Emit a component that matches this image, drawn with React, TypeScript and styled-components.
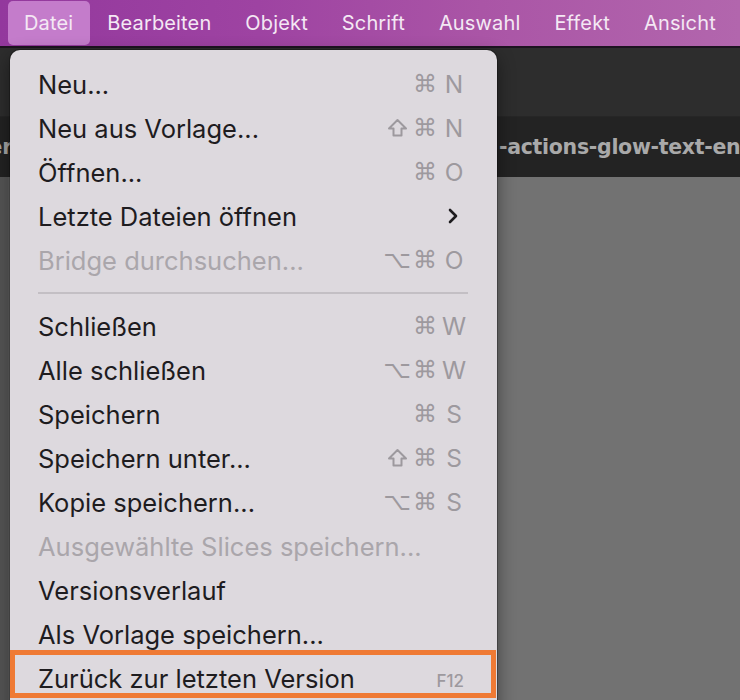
import React from 'react'
import styled, { createGlobalStyle } from 'styled-components'

const GlobalStyle = createGlobalStyle`
  html, body {
    margin: 0;
    padding: 0;
    background: #2d2d2d;
  }
  #root {
    width: 740px;
    height: 700px;
    overflow: hidden;
  }
`

type Shortcut = {
	mods: string[]
	key: string
}

type MenuEntry =
	| { kind: 'item'; label: string; shortcut?: Shortcut; fkey?: string; disabled?: boolean; submenu?: boolean; marked?: boolean }
	| { kind: 'separator' }

const topMenus = ['Datei', 'Bearbeiten', 'Objekt', 'Schrift', 'Auswahl', 'Effekt', 'Ansicht']

const entries: MenuEntry[] = [
	{ kind: 'item', label: 'Neu...', shortcut: { mods: ['cmd'], key: 'N' } },
	{ kind: 'item', label: 'Neu aus Vorlage...', shortcut: { mods: ['shift', 'cmd'], key: 'N' } },
	{ kind: 'item', label: 'Öffnen...', shortcut: { mods: ['cmd'], key: 'O' } },
	{ kind: 'item', label: 'Letzte Dateien öffnen', submenu: true },
	{ kind: 'item', label: 'Bridge durchsuchen...', shortcut: { mods: ['alt', 'cmd'], key: 'O' }, disabled: true },
	{ kind: 'separator' },
	{ kind: 'item', label: 'Schließen', shortcut: { mods: ['cmd'], key: 'W' } },
	{ kind: 'item', label: 'Alle schließen', shortcut: { mods: ['alt', 'cmd'], key: 'W' } },
	{ kind: 'item', label: 'Speichern', shortcut: { mods: ['cmd'], key: 'S' } },
	{ kind: 'item', label: 'Speichern unter...', shortcut: { mods: ['shift', 'cmd'], key: 'S' } },
	{ kind: 'item', label: 'Kopie speichern...', shortcut: { mods: ['alt', 'cmd'], key: 'S' } },
	{ kind: 'item', label: 'Ausgewählte Slices speichern...', disabled: true },
	{ kind: 'item', label: 'Versionsverlauf' },
	{ kind: 'item', label: 'Als Vorlage speichern...' },
	{ kind: 'item', label: 'Zurück zur letzten Version', fkey: 'F12', marked: true },
]

// shift is drawn, the other two modifiers are plain glyphs
const ShiftIcon = () => (
	<svg width="21" height="20" viewBox="0 0 21 20">
		<path d="M10.5 2 L19 10.5 L14.5 10.5 L14.5 17.5 L6.5 17.5 L6.5 10.5 L2 10.5 Z" fill="none" stroke="currentColor" strokeWidth="2" strokeLinejoin="round" />
	</svg>
)

const Modifier = ({ name }: { name: string }) => {
	if (name === 'shift') return <Mod><ShiftIcon /></Mod>
	return <Mod>{name === 'cmd' ? '⌘' : '⌥'}</Mod>
}

const Chevron = () => (
	<svg width="12" height="18" viewBox="0 0 12 18">
		<polyline points="3,3 9,9 3,15" fill="none" stroke="#1e1c1f" strokeWidth="2.6" strokeLinecap="round" strokeLinejoin="round" />
	</svg>
)

export default function App() {
	return (
		<>
			<GlobalStyle />
			<Screen>
				<MenuBar>
					{topMenus.map((m, i) => (
						<BarItem key={m} active={i === 0}>{m}</BarItem>
					))}
				</MenuBar>
				<Workspace>
					<Toolbar />
					<TabStrip>
						<TabClip><TabLabel>er</TabLabel></TabClip>
						<TabLabel>-actions-glow-text-en</TabLabel>
					</TabStrip>
					<Canvas />
				</Workspace>
				<Dropdown>
					{entries.map((e, i) =>
						e.kind === 'separator' ? (
							<Separator key={i} />
						) : (
							<Row key={i} disabled={e.disabled} marked={e.marked}>
								<Label>{e.label}</Label>
								{e.shortcut && (
									<Keys>
										<Mods>
											{e.shortcut.mods.map(m => (
												<Modifier key={m} name={m} />
											))}
										</Mods>
										<Key>{e.shortcut.key}</Key>
									</Keys>
								)}
								{e.fkey && <FKey>{e.fkey}</FKey>}
								{e.submenu && <Chevron />}
							</Row>
						)
					)}
				</Dropdown>
			</Screen>
		</>
	)
}

const Screen = styled.div`
  position: relative;
  width: 740px;
  height: 700px;
  display: flex;
  flex-direction: column;
  overflow: hidden;
  font-family: Inter, "Liberation Sans", sans-serif;
`

const MenuBar = styled.div`
  height: 48px;
  display: flex;
  align-items: stretch;
  padding: 1px 0 1px 8px;
  box-sizing: border-box;
  background: linear-gradient(90deg, #93389d 0%, #9e43a2 35%, #aa55a6 65%, #b266ad 100%);
  border-bottom: 2px solid #1d1320;
  flex-shrink: 0;
`

const BarItem = styled.div<{ active?: boolean }>`
  display: flex;
  align-items: center;
  padding: 0 17px 0 16px;
  margin-right: 1px;
  border-radius: 5px;
  font-size: 20px;
  color: #f4e8f4;
  letter-spacing: 0.15px;
  background: ${p => (p.active ? '#c47ccb' : 'transparent')};
`

const Workspace = styled.div`
  flex: 1;
  display: flex;
  flex-direction: column;
`

const Toolbar = styled.div`
  height: 68px;
  flex-shrink: 0;
  background: #2d2d2d;
  border-bottom: 1px solid #262626;
`

const TabStrip = styled.div`
  height: 60px;
  flex-shrink: 0;
  background: #232323;
  display: flex;
  align-items: center;
  overflow: hidden;
`

const TabClip = styled.div`
  width: 12px;
  flex-shrink: 0;
  overflow: hidden;
  display: flex;
  justify-content: flex-end;
  margin-right: 487px;
`

const TabLabel = styled.span`
  flex-shrink: 0;
  font-family: "DejaVu Sans", sans-serif;
  font-weight: bold;
  font-size: 20.5px;
  letter-spacing: -0.3px;
  color: #a9a9a9;
  white-space: nowrap;
`

const Canvas = styled.div`
  flex: 1;
  background: linear-gradient(90deg, #555 0px, #595959 8px, #727272 10px, #727272 100%);
`

const Dropdown = styled.div`
  position: absolute;
  top: 50px;
  left: 10px;
  width: 487px;
  height: 680px;
  box-sizing: border-box;
  padding-top: 12px;
  background: #ddd9de;
  border-radius: 10px 10px 0 0;
  box-shadow: 0 0 0 1px rgba(0, 0, 0, 0.25), 0 6px 18px rgba(0, 0, 0, 0.45);
  display: flex;
  flex-direction: column;
`

const Separator = styled.div`
  height: 22px;
  flex-shrink: 0;
  margin: 0 29px 0 28px;
  display: flex;
  align-items: center;

  &::before {
    content: '';
    flex: 1;
    height: 2px;
    background: #c3bfc4;
  }
`

const Row = styled.div<{ disabled?: boolean; marked?: boolean }>`
  position: relative;
  height: 44px;
  flex-shrink: 0;
  display: flex;
  align-items: center;
  padding: 0 38px 0 28px;
  color: ${p => (p.disabled ? '#aaa6ab' : '#1e1c1f')};

  ${p =>
		p.marked &&
		`
    &::after {
      content: '';
      position: absolute;
      top: -6px;
      bottom: 2px;
      left: 0;
      right: 1px;
      border: 5px solid #ef7a34;
    }
  `}
`

const Label = styled.span`
  flex: 1;
  font-size: 25.5px;
  white-space: nowrap;
`

const Keys = styled.div`
  display: flex;
  align-items: center;
  color: #9d999e;
  margin-right: -10px;
`

const Mods = styled.div`
  display: flex;
  align-items: center;
`

const Mod = styled.span`
  width: 28px;
  display: flex;
  justify-content: center;
  font-family: "DejaVu Sans", sans-serif;
  font-size: 24px;
`

const Key = styled.span`
  width: 30px;
  text-align: center;
  font-size: 24.5px;
`

const FKey = styled.span`
  font-size: 17px;
  font-weight: 500;
  color: #9d999e;
  margin: 6px -5px 0 0;
`
